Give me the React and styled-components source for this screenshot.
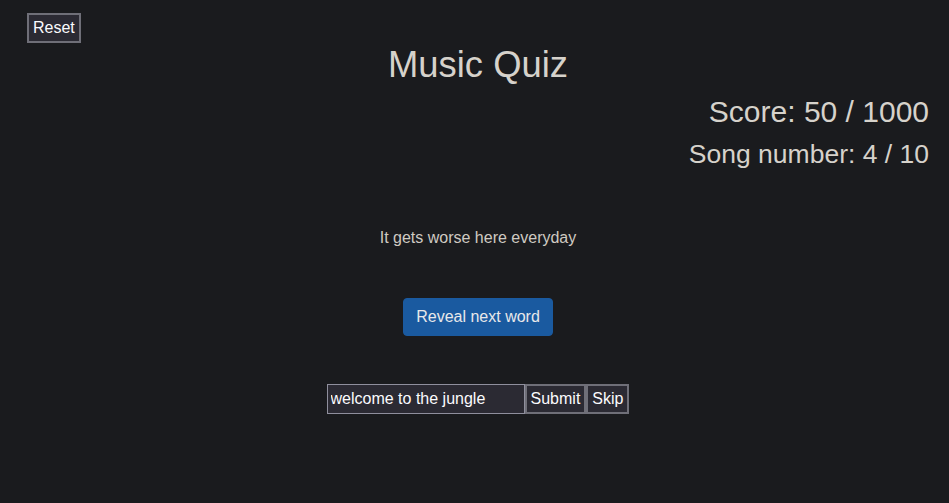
import React, { useState } from 'react'
import styled, { createGlobalStyle } from 'styled-components'

const GlobalStyle = createGlobalStyle`
  html, body {
    margin: 0;
    padding: 0;
    background: #1a1b1e;
  }
  body {
    font-family: "Liberation Sans", Arial, sans-serif;
    color: #d6d2cb;
  }
`

const Page = styled.div`
  min-height: 100vh;
  box-sizing: border-box;
  padding: 13px 20px 0 27px;
  display: flex;
  flex-direction: column;
`

const DarkButton = styled.button`
  font-family: "Liberation Sans", Arial, sans-serif;
  font-size: 16px;
  line-height: 18px;
  color: #fbfbfe;
  background: #2b2a33;
  border: 2px solid #6f6f78;
  padding: 4px 4px;
  margin: 0;
  cursor: pointer;
`

const TopBar = styled.div`
  display: flex;
  justify-content: flex-start;
`

const Title = styled.h1`
  margin: 1px 0 0;
  text-align: center;
  font-size: 36.4px;
  font-weight: 400;
  color: #d6d2cb;
`

const Stats = styled.div`
  display: flex;
  flex-direction: column;
  align-items: flex-end;
  gap: 10px;
  margin-top: 9px;
`

const Stat = styled.div`
  font-size: ${p => p.size}px;
  color: #d6d2cb;
`

const Lyric = styled.p`
  margin: 59px 0 0;
  text-align: center;
  font-size: 16px;
  color: #cfcac2;
`

const Center = styled.div`
  display: flex;
  justify-content: center;
  margin-top: ${p => p.top}px;
`

const RevealButton = styled.button`
  font-family: "Liberation Sans", Arial, sans-serif;
  font-size: 16px;
  line-height: 24px;
  padding: 6px 12px;
  color: #e8e8ea;
  background: #1a5aa0;
  border: 1px solid #1a5aa0;
  border-radius: 4px;
  cursor: pointer;
`

const Form = styled.form`
  display: flex;
  align-items: stretch;
`

const GuessInput = styled.input`
  font-family: "Liberation Sans", Arial, sans-serif;
  font-size: 16px;
  line-height: 18px;
  width: 198px;
  box-sizing: border-box;
  height: 30px;
  padding: 0 3px;
  color: #fbfbfe;
  background: #2b2a33;
  border: 1px solid #8f8f9d;
  outline: none;
`

export default function App() {
  const [guess, setGuess] = useState('welcome to the jungle')

  return (
    <>
      <GlobalStyle />
      <Page>
        <TopBar>
          <DarkButton>Reset</DarkButton>
        </TopBar>
        <Title>Music Quiz</Title>
        <Stats>
          <Stat size={30}>Score: 50 / 1000</Stat>
          <Stat size={26.5}>Song number: 4 / 10</Stat>
        </Stats>
        <Lyric>It gets worse here everyday</Lyric>
        <Center top={51}>
          <RevealButton>Reveal next word</RevealButton>
        </Center>
        <Center top={48}>
          <Form onSubmit={e => e.preventDefault()}>
            <GuessInput value={guess} onChange={e => setGuess(e.target.value)} />
            <DarkButton type="submit">Submit</DarkButton>
            <DarkButton type="button">Skip</DarkButton>
          </Form>
        </Center>
      </Page>
    </>
  )
}
